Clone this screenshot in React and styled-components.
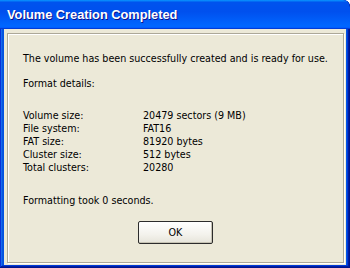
import React from 'react';
import styled, { createGlobalStyle } from 'styled-components';

const GlobalStyle = createGlobalStyle`
  html, body {
    margin: 0;
    padding: 0;
    background: #ffffff;
  }
`;

const uiFont = `'DejaVu Sans Condensed', 'Liberation Sans', Arial, sans-serif`;

const Window = styled.div`
  width: 350px;
  height: 268px;
  display: flex;
  flex-direction: column;
  background: #0054e3;
  border-top-right-radius: 7px;
  box-shadow: inset -1px -1px #00138c, inset 1px 1px #0831d9,
    inset -2px -2px #001ea0, inset 2px 2px #166aee, inset -3px -3px #003bda,
    inset 3px 3px #0855dd;
  font-family: ${uiFont};
  overflow: hidden;
`;

const TitleBar = styled.div`
  height: 29px;
  flex-shrink: 0;
  display: flex;
  align-items: center;
  padding: 0 7px;
  background: linear-gradient(
    180deg,
    #0997ff,
    #0053ee 8%,
    #0050ee 40%,
    #06f 88%,
    #06f 93%,
    #005bff 95%,
    #003dd7 96%,
    #003dd7
  );
  border-top-right-radius: 7px;
`;

const Title = styled.span`
  color: #ffffff;
  font-family: 'Liberation Sans', Arial, sans-serif;
  font-weight: bold;
  font-size: 12.8px;
  text-shadow: 1px 1px #0f1089;
`;

const Body = styled.div`
  flex: 1;
  margin: 0 4px 3px 4px;
  padding: 4px 3px 2px 3px;
  background: #ece9d8;
  display: flex;
`;

const Panel = styled.div`
  flex: 1;
  border: 1px solid #aca899;
  box-shadow: inset 1px 1px #ffffff, 1px 1px #ffffff;
  padding: 18px 15px 0 15px;
  display: flex;
  flex-direction: column;
  font-size: 10.65px;
  line-height: 13px;
  color: #000000;
  white-space: nowrap;
`;

const Text = styled.div`
  margin-top: ${(p) => p.$gap || 0}px;
`;

const Details = styled.div`
  display: grid;
  grid-template-columns: 120px 1fr;
  margin-top: 19px;
`;

const Footer = styled.div`
  display: flex;
  justify-content: center;
  margin-top: 14px;
`;

const Button = styled.button`
  width: 75px;
  height: 23px;
  font-family: ${uiFont};
  font-size: 10.65px;
  color: #000000;
  border: 1px solid #2c2c2c;
  border-radius: 2px;
  background: linear-gradient(180deg, #ffffff, #f3f2ec 60%, #e6e4da);
  box-shadow: inset -1px -1px #c6c3b4;
  padding: 0;
`;

const details = [
  ['Volume size:', '20479 sectors (9 MB)'],
  ['File system:', 'FAT16'],
  ['FAT size:', '81920 bytes'],
  ['Cluster size:', '512 bytes'],
  ['Total clusters:', '20280'],
];

export default function App() {
  return (
    <>
      <GlobalStyle />
      <Window>
        <TitleBar>
          <Title>Volume Creation Completed</Title>
        </TitleBar>
        <Body>
          <Panel>
            <Text>The volume has been successfully created and is ready for use.</Text>
            <Text $gap={12}>Format details:</Text>
            <Details>
              {details.map(([label, value]) => (
                <React.Fragment key={label}>
                  <span>{label}</span>
                  <span>{value}</span>
                </React.Fragment>
              ))}
            </Details>
            <Text $gap={20}>Formatting took 0 seconds.</Text>
            <Footer>
              <Button>OK</Button>
            </Footer>
          </Panel>
        </Body>
      </Window>
    </>
  );
}
